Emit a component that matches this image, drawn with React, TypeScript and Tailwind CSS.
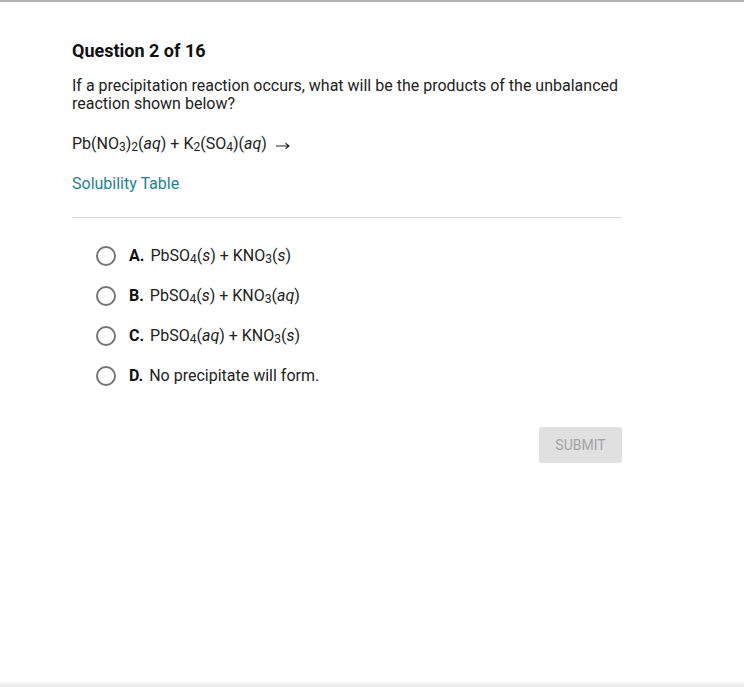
import React from "react";

const Sub = ({ children }: { children: React.ReactNode }) => (
  <sub className="text-[12px] relative top-[2px] align-baseline">{children}</sub>
);

const options = [
  {
    key: "A.",
    body: (
      <>
        PbSO<Sub>4</Sub>(<i>s</i>) + KNO<Sub>3</Sub>(<i>s</i>)
      </>
    ),
  },
  {
    key: "B.",
    body: (
      <>
        PbSO<Sub>4</Sub>(<i>s</i>) + KNO<Sub>3</Sub>(<i>aq</i>)
      </>
    ),
  },
  {
    key: "C.",
    body: (
      <>
        PbSO<Sub>4</Sub>(<i>aq</i>) + KNO<Sub>3</Sub>(<i>s</i>)
      </>
    ),
  },
  { key: "D.", body: <>No precipitate will form.</> },
];

export default function App() {
  return (
    <div
      className="relative w-[744px] h-[687px] bg-white overflow-hidden text-[#222]"
      style={{ fontFamily: "Roboto, 'Liberation Sans', sans-serif" }}
    >
      <div className="h-[2px] bg-[#b4b4b4]" />
      <div className="pl-[72px] pt-[37px] w-[622px]">
        <h1 className="text-[18px] font-bold leading-6 text-[#111]">Question 2 of 16</h1>
        <p className="mt-[14px] text-[16px] leading-[18px]">
          If a precipitation reaction occurs, what will be the products of the unbalanced reaction
          shown below?
        </p>
        <p className="mt-[22px] text-[16px] leading-[18px] flex items-center">
          <span>
            Pb(NO<Sub>3</Sub>)<Sub>2</Sub>(<i>aq</i>) + K<Sub>2</Sub>(SO<Sub>4</Sub>)(<i>aq</i>)
          </span>
          <svg className="ml-[9px] mt-[3px]" width="14" height="8" viewBox="0 0 14 8" fill="none" stroke="#222" strokeWidth="1.1">
            <path d="M0 4H13M9.5 1.2L13 4L9.5 6.8" />
          </svg>
        </p>
        <a className="block mt-[22px] text-[16px] leading-[18px] text-[#1a8396]">Solubility Table</a>
        <div className="mt-[24px] h-px bg-[#dcdcdc]" />
        <ul className="mt-[28px] pl-[24px] flex flex-col gap-[20px]">
          {options.map((o) => (
            <li key={o.key} className="flex items-center h-[20px] text-[16px]">
              <span className="w-[20px] h-[20px] rounded-full border-2 border-[#757575] shrink-0" />
              <span className="ml-[13px] font-bold text-[16px] text-[#111]">{o.key}</span>
              <span className="ml-[6px]">{o.body}</span>
            </li>
          ))}
        </ul>
        <div className="mt-[41px] flex justify-end">
          <button className="w-[83px] h-[36px] rounded-[3px] bg-[#e0e0e0] text-[#a3a3a3] text-[14px]">
            SUBMIT
          </button>
        </div>
      </div>
      <div className="absolute bottom-0 left-0 right-0 h-[6px] bg-gradient-to-b from-transparent to-[#e6e6e6]" />
    </div>
  );
}
